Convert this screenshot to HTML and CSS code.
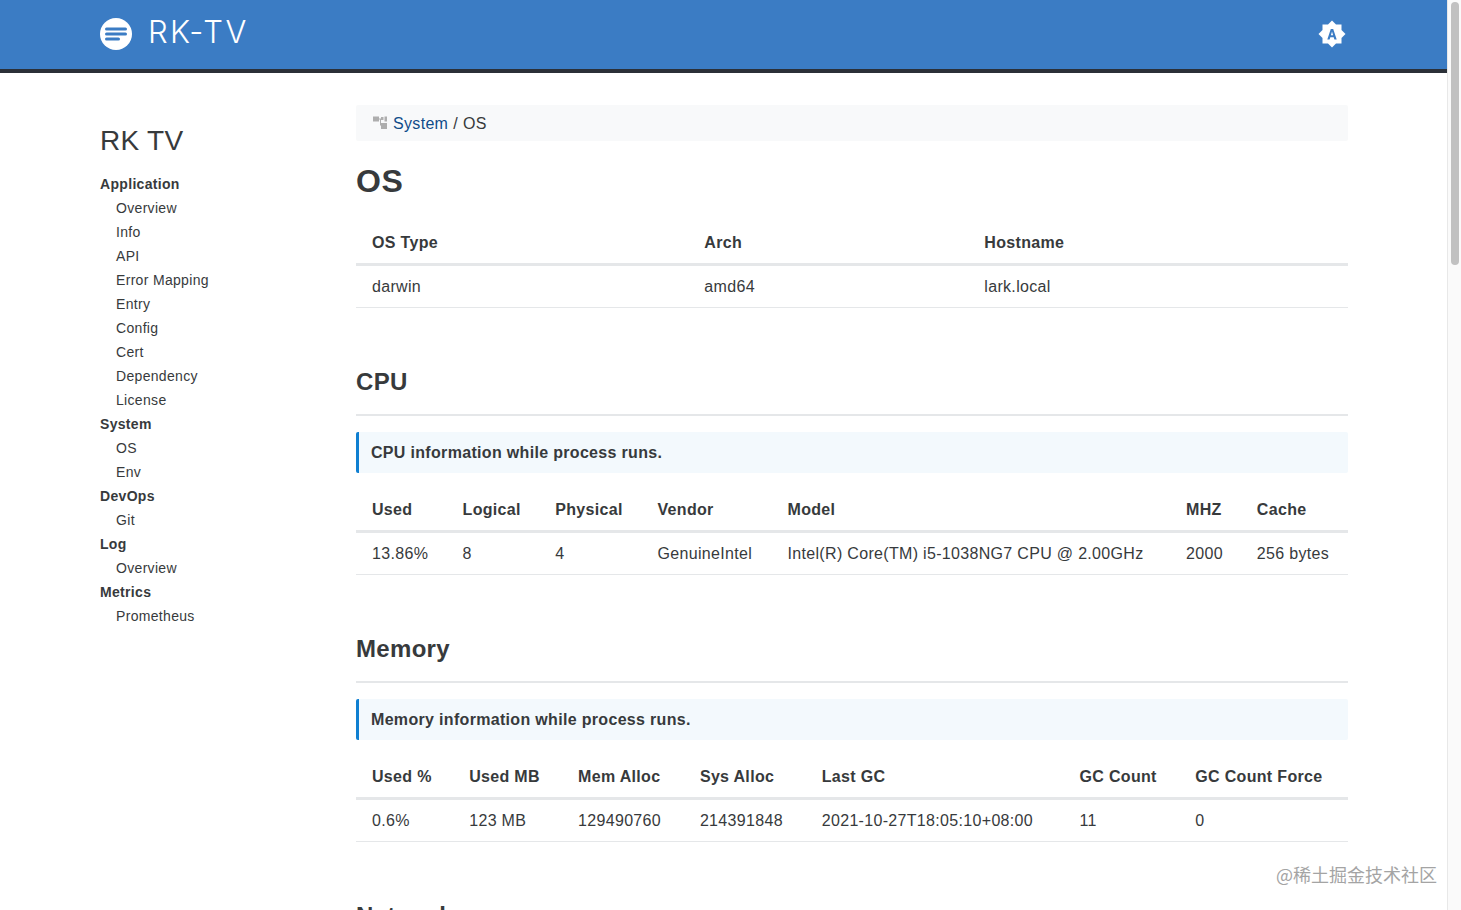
FILE: index.html
```html
<!DOCTYPE html>
<html lang="en">
<head>
<meta charset="utf-8">
<title>RK-TV OS</title>
<link rel="stylesheet" href="styles.css">
</head>
<body>
<div class="viewport">
  <div class="page">
    <header class="topbar">
      <a class="brand">
        <svg class="brand-icon" viewBox="0 0 32 32" width="32" height="32"><circle cx="16" cy="16" r="16" fill="#fff"/><rect x="5" y="9.500" width="22" height="3" rx="1.500" fill="#3b7cc4"/><rect x="5" y="14.500" width="22" height="3" rx="1.500" fill="#3b7cc4"/><rect x="5" y="19.500" width="15" height="3" rx="1.500" fill="#3b7cc4"/></svg>
        <span class="brand-name">RK-TV</span>
      </a>
      <svg class="theme-icon" viewBox="0 0 28 28" width="28" height="28"><path d="M14 0.500l4 4h5.500v5.500l4 4-4 4v5.500H18l-4 4-4-4H4.500V18l-4-4 4-4V4.500H10z" fill="#fff"/><path d="M9.300 19.500L12.800 9h2.400l3.500 10.500h-2.300l-.7-2.300h-3.400l-.7 2.300zM12.900 15.300h2.200L14 11.600z" fill="#3b7cc4"/></svg>
    </header>
    <div class="layout">
      <aside class="sidebar">
        <h2 class="side-title">RK TV</h2>
        <ul class="side-nav">
          <li class="group">Application</li>
          <li>Overview</li><li>Info</li><li>API</li><li>Error Mapping</li><li>Entry</li><li>Config</li><li>Cert</li><li>Dependency</li><li>License</li>
          <li class="group">System</li>
          <li>OS</li><li>Env</li>
          <li class="group">DevOps</li>
          <li>Git</li>
          <li class="group">Log</li>
          <li>Overview</li>
          <li class="group">Metrics</li>
          <li>Prometheus</li>
        </ul>
      </aside>
      <main class="content">
        <nav class="crumb">
          <svg class="crumb-icon" viewBox="0 0 16 16" width="16" height="16"><path d="M1 1.500h6v5H1zM9 2h2.500v3H9zM12.500 1.500H15v5h-2.500zM9 8h6v6H9zM7 3.500h2v1H7zM8 4.500h1v6H8z" fill="#aeaeae"/></svg>
          <a class="crumb-link">System</a><span class="crumb-sep">/</span><span>OS</span>
        </nav>
        <h1 class="page-title">OS</h1>
        <table class="data os-table">
          <thead><tr><th>OS Type</th><th>Arch</th><th>Hostname</th></tr></thead>
          <tbody><tr><td>darwin</td><td>amd64</td><td>lark.local</td></tr></tbody>
        </table>
        <section class="block">
          <h2 class="section-title">CPU</h2>
          <p class="note">CPU information while process runs.</p>
          <table class="data">
            <thead><tr><th>Used</th><th>Logical</th><th>Physical</th><th>Vendor</th><th>Model</th><th>MHZ</th><th>Cache</th></tr></thead>
            <tbody><tr><td>13.86%</td><td>8</td><td>4</td><td>GenuineIntel</td><td>Intel(R) Core(TM) i5-1038NG7 CPU @ 2.00GHz</td><td>2000</td><td>256 bytes</td></tr></tbody>
          </table>
        </section>
        <section class="block">
          <h2 class="section-title">Memory</h2>
          <p class="note">Memory information while process runs.</p>
          <table class="data">
            <thead><tr><th>Used %</th><th>Used MB</th><th>Mem Alloc</th><th>Sys Alloc</th><th>Last GC</th><th>GC Count</th><th>GC Count Force</th></tr></thead>
            <tbody><tr><td>0.6%</td><td>123 MB</td><td>129490760</td><td>214391848</td><td>2021-10-27T18:05:10+08:00</td><td>11</td><td>0</td></tr></tbody>
          </table>
        </section>
        <section class="block">
          <h2 class="section-title">Network</h2>
        </section>
      </main>
    </div>
  </div>
  <div class="scrollbar"><div class="scroll-thumb"></div></div>
  <div class="watermark">@稀土掘金技术社区</div>
</div>
</body>
</html>
```
FILE: styles.css
```css
* { box-sizing: border-box; }
html, body { margin: 0; padding: 0; height: 100%; overflow: hidden; }
body {
  font-family: "Liberation Sans", Arial, sans-serif;
  font-size: 16px;
  color: #373a3c;
  background: #fff;
  letter-spacing: 0.02em;
}
.viewport { display: flex; height: 910px; position: relative; overflow: hidden; }
.page { flex: 1; min-width: 0; }
.topbar {
  height: 73px;
  background: #3b7cc4;
  border-bottom: 4px solid #2b3038;
  display: flex;
  align-items: center;
  justify-content: space-between;
  padding: 0 101px 1px 100px;
}
.brand { display: flex; align-items: center; gap: 16px; }
.brand-name { font-family: "Inter", sans-serif; font-weight: 300; font-size: 31px; line-height: 40px; color: #fff; letter-spacing: 2.4px; margin-top: -5px; }
.layout { display: flex; padding: 32px 99px 0 100px; }
.sidebar { width: 256px; flex: none; padding-top: 18px; }
.side-title { margin: 0 0 13px; font-size: 28px; font-weight: 400; line-height: 36px; color: #373a3c; letter-spacing: 0.3px; }
.side-nav { list-style: none; margin: 0; padding: 0; font-size: 14px; line-height: 24px; }
.side-nav li { padding-left: 16px; }
.side-nav li.group { padding-left: 0; font-weight: 700; }
.content { flex: 1; min-width: 0; }
.crumb { display: flex; align-items: center; height: 36px; padding: 2px 16px 0; background: #f8f9fa; border-radius: 2px; }
.crumb-icon { margin: -2px 5px 0 0; }
.crumb-link { color: #0f4c8a; }
.crumb-sep { padding: 0 5px; }
.page-title { margin: 20px 0 22px; font-size: 32px; line-height: 40px; font-weight: 700; letter-spacing: 0.5px; }
.data { width: 100%; border-collapse: collapse; }
.data th { padding: 8px 16px 8px; text-align: left; font-weight: 700; line-height: 24px; border-bottom: 3px solid #e5e7e9; white-space: nowrap; }
.data td { padding: 9px 16px 8px; line-height: 24px; border-bottom: 1px solid #e5e7e9; white-space: nowrap; }
.block { margin-top: 58px; }
.section-title { margin: 0 0 16px; padding-bottom: 16px; font-size: 24px; line-height: 32px; font-weight: 700; border-bottom: 2px solid #e5e7e9; }
.note { margin: 0 0 17px; height: 41px; padding: 0 12px; display: flex; align-items: center; font-weight: 700; background: #f3f9fd; border-left: 3px solid #0f7fd1; border-radius: 2px; }
.scrollbar { width: 14px; flex: none; background: #fafafa; border-left: 1px solid #e8e8e8; padding: 2px 2px 0 3px; }
.scroll-thumb { height: 263px; background: #c1c1c1; border-radius: 5px; }
.watermark { position: absolute; left: 1276px; top: 862px; font-family: "Noto Sans CJK SC", sans-serif; font-size: 18px; line-height: 24px; color: #a4a4a4; letter-spacing: 0; }
```
